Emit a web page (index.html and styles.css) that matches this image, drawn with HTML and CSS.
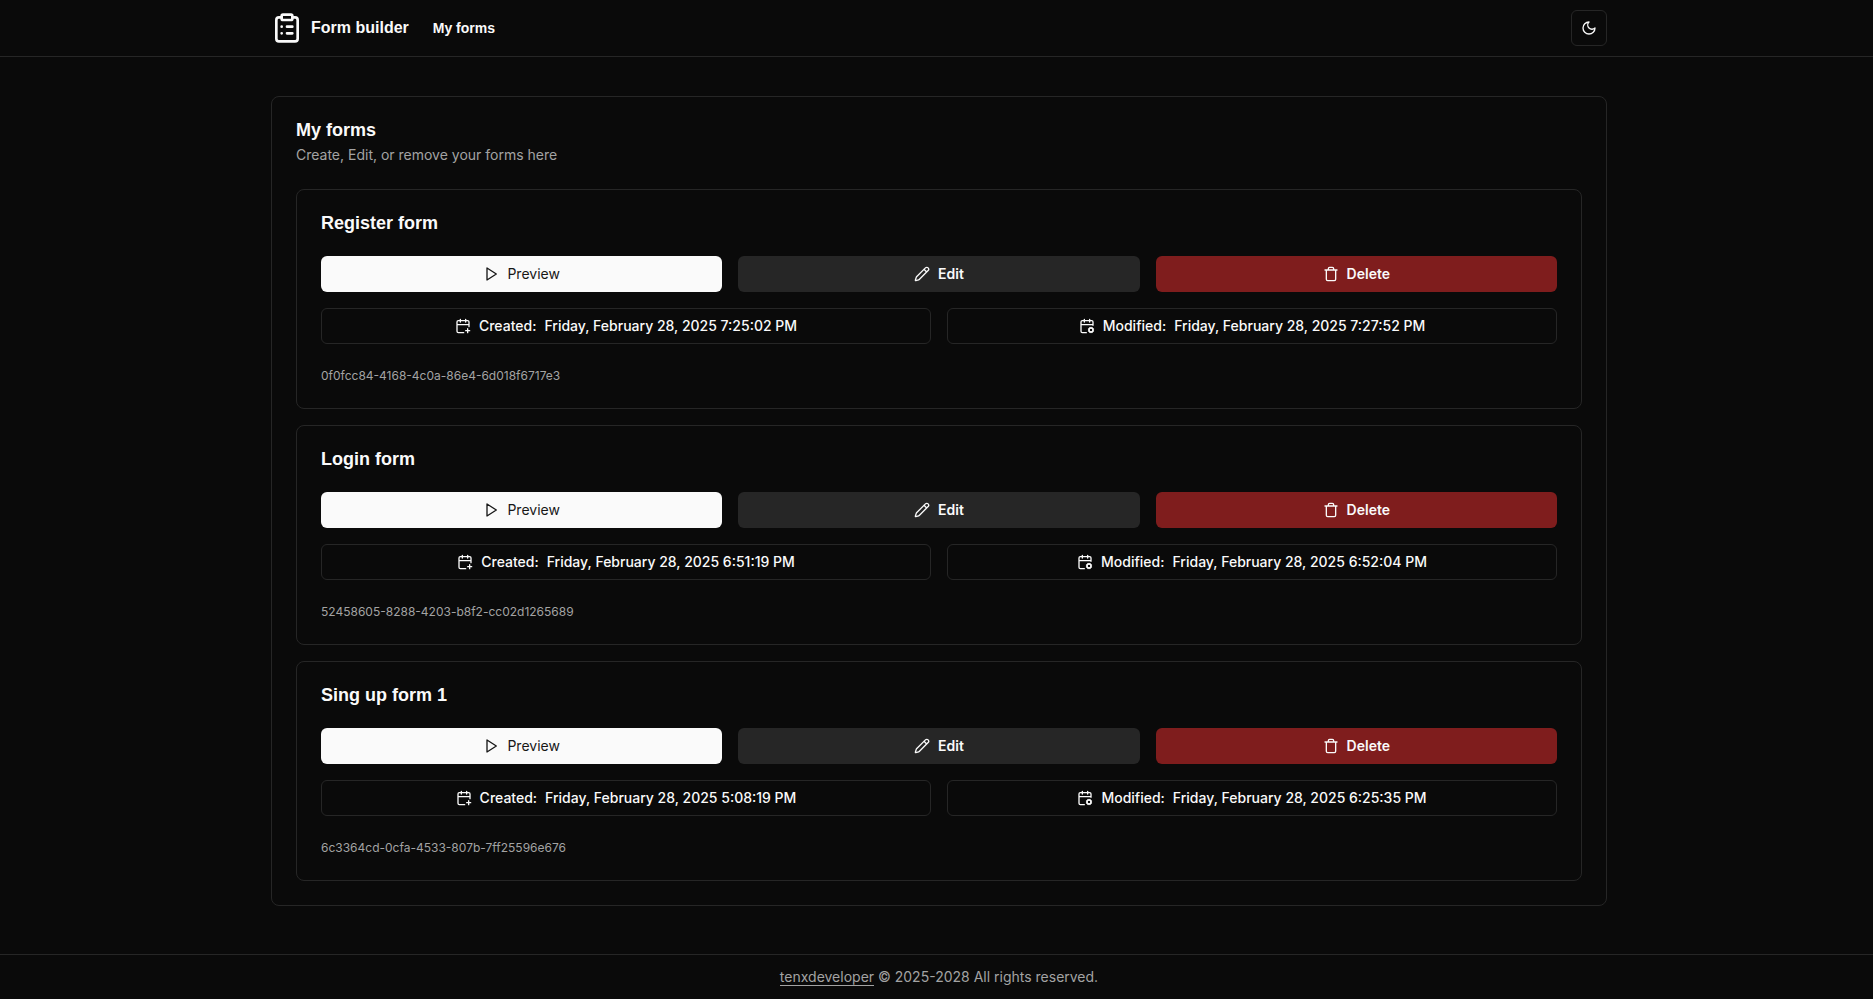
FILE: index.html
```html
<!DOCTYPE html>
<html lang="en">
<head>
<meta charset="utf-8">
<title>Form builder</title>
<meta name="viewport" content="width=device-width, initial-scale=1">
<link rel="stylesheet" href="styles.css">
</head>
<body>
<svg class="sprite" aria-hidden="true">
  <symbol id="clipboard" viewBox="0 0 24 24"><rect width="8" height="4" x="8" y="2" rx="1"/><path d="M16 4h2a2 2 0 0 1 2 2v14a2 2 0 0 1-2 2H6a2 2 0 0 1-2-2V6a2 2 0 0 1 2-2h2M12 11h4M12 16h4M8 11h.01M8 16h.01"/></symbol>
  <symbol id="moon" viewBox="0 0 24 24"><path d="M12 3a6 6 0 0 0 9 9 9 9 0 1 1-9-9Z"/></symbol>
  <symbol id="play" viewBox="0 0 24 24"><path d="M6 3 20 12 6 21Z"/></symbol>
  <symbol id="pencil" viewBox="0 0 24 24"><path d="M21.174 6.812a1 1 0 0 0-3.986-3.987L3.842 16.174a2 2 0 0 0-.5.83l-1.321 4.352a.5.5 0 0 0 .623.622l4.353-1.32a2 2 0 0 0 .83-.497zM15 5l4 4"/></symbol>
  <symbol id="trash" viewBox="0 0 24 24"><path d="M3 6h18M19 6v14c0 1-1 2-2 2H7c-1 0-2-1-2-2V6M8 6V4c0-1 1-2 2-2h4c1 0 2 1 2 2v2"/></symbol>
  <symbol id="calendar-plus" viewBox="0 0 24 24"><path d="M8 2v4M16 2v4M21 13V6a2 2 0 0 0-2-2H5a2 2 0 0 0-2 2v14a2 2 0 0 0 2 2h8M3 10h18M16 19h6M19 16v6"/></symbol>
  <symbol id="calendar-cog" viewBox="0 0 24 24"><path d="M8 2v4M16 2v4M21 11V6a2 2 0 0 0-2-2H5a2 2 0 0 0-2 2v14a2 2 0 0 0 2 2h6M3 10h18M15.2 16.9l-.9-.4M15.2 19.1l-.9.4M16.9 15.2l-.4-.9M16.9 20.8l-.4.9M19.5 14.3l-.4.9M19.5 21.7l-.4-.9M21.7 16.5l-.9.4M21.7 19.5l-.9-.4"/><circle cx="18" cy="18" r="3"/></symbol>
</svg>

<header class="site-header">
  <div class="container header-row">
    <nav class="nav">
      <a class="brand" href="#"><svg class="icon icon-logo"><use href="#clipboard"/></svg>Form builder</a>
      <a class="nav-link" href="#">My forms</a>
    </nav>
    <button class="theme-toggle" type="button" aria-label="Toggle theme"><svg class="icon"><use href="#moon"/></svg></button>
  </div>
</header>

<main class="container main">
  <section class="card">
    <div class="card-header">
      <h1 class="title">My forms</h1>
      <p class="description">Create, Edit, or remove your forms here</p>
    </div>
    <div class="form-list">
      <article class="card">
        <h2 class="title">Register form</h2>
        <div class="form-body">
          <div class="actions">
            <button class="button primary" type="button"><svg class="icon"><use href="#play"/></svg>Preview</button>
            <button class="button secondary" type="button"><svg class="icon"><use href="#pencil"/></svg>Edit</button>
            <button class="button destructive" type="button"><svg class="icon"><use href="#trash"/></svg>Delete</button>
          </div>
          <div class="dates">
            <div class="badge"><svg class="icon"><use href="#calendar-plus"/></svg><span>Created:</span><time>Friday, February 28, 2025 7:25:02 PM</time></div>
            <div class="badge"><svg class="icon"><use href="#calendar-cog"/></svg><span>Modified:</span><time>Friday, February 28, 2025 7:27:52 PM</time></div>
          </div>
        </div>
        <p class="form-id">0f0fcc84-4168-4c0a-86e4-6d018f6717e3</p>
      </article>
      <article class="card">
        <h2 class="title">Login form</h2>
        <div class="form-body">
          <div class="actions">
            <button class="button primary" type="button"><svg class="icon"><use href="#play"/></svg>Preview</button>
            <button class="button secondary" type="button"><svg class="icon"><use href="#pencil"/></svg>Edit</button>
            <button class="button destructive" type="button"><svg class="icon"><use href="#trash"/></svg>Delete</button>
          </div>
          <div class="dates">
            <div class="badge"><svg class="icon"><use href="#calendar-plus"/></svg><span>Created:</span><time>Friday, February 28, 2025 6:51:19 PM</time></div>
            <div class="badge"><svg class="icon"><use href="#calendar-cog"/></svg><span>Modified:</span><time>Friday, February 28, 2025 6:52:04 PM</time></div>
          </div>
        </div>
        <p class="form-id">52458605-8288-4203-b8f2-cc02d1265689</p>
      </article>
      <article class="card">
        <h2 class="title">Sing up form 1</h2>
        <div class="form-body">
          <div class="actions">
            <button class="button primary" type="button"><svg class="icon"><use href="#play"/></svg>Preview</button>
            <button class="button secondary" type="button"><svg class="icon"><use href="#pencil"/></svg>Edit</button>
            <button class="button destructive" type="button"><svg class="icon"><use href="#trash"/></svg>Delete</button>
          </div>
          <div class="dates">
            <div class="badge"><svg class="icon"><use href="#calendar-plus"/></svg><span>Created:</span><time>Friday, February 28, 2025 5:08:19 PM</time></div>
            <div class="badge"><svg class="icon"><use href="#calendar-cog"/></svg><span>Modified:</span><time>Friday, February 28, 2025 6:25:35 PM</time></div>
          </div>
        </div>
        <p class="form-id">6c3364cd-0cfa-4533-807b-7ff25596e676</p>
      </article>
    </div>
  </section>
</main>

<footer class="site-footer">
  <p class="container"><a class="footer-link" href="#">tenxdeveloper</a> © 2025-2028 All rights reserved.</p>
</footer>
</body>
</html>
```
FILE: styles.css
```css
:root {
  --background: #0a0a0a;
  --foreground: #fafafa;
  --muted: #a3a3a3;
  --border: #262626;
  --font-heading: "Liberation Sans", Arial, sans-serif;
}

* {
  box-sizing: border-box;
}

body {
  display: flex;
  flex-direction: column;
  min-height: 100vh;
  margin: 0;
  background: var(--background);
  color: var(--foreground);
  font-family: Inter, "Liberation Sans", sans-serif;
  font-size: 14px;
  line-height: 20px;
}

h1, h2, p {
  margin: 0;
}

a {
  color: inherit;
  text-decoration: none;
}

button {
  margin: 0;
  font: inherit;
  cursor: pointer;
}

.sprite {
  position: absolute;
  width: 0;
  height: 0;
}

.icon {
  flex: none;
  width: 16px;
  height: 16px;
  fill: none;
  stroke: currentColor;
  stroke-width: 2;
  stroke-linecap: round;
  stroke-linejoin: round;
}

.icon-logo {
  width: 32px;
  height: 32px;
}

.container {
  width: 100%;
  max-width: 1405px;
  margin: 0 auto;
  padding: 0 32px 0 37px;
}

.site-header {
  border-bottom: 1px solid var(--border);
}

.header-row {
  display: flex;
  align-items: center;
  justify-content: space-between;
  height: 56px;
}

.nav {
  display: flex;
  align-items: center;
  gap: 24px;
  font-family: var(--font-heading);
  font-weight: 700;
}

.brand {
  display: flex;
  align-items: center;
  gap: 8px;
  font-size: 16px;
}

.theme-toggle {
  display: flex;
  align-items: center;
  justify-content: center;
  width: 36px;
  height: 36px;
  padding: 0;
  border: 1px solid var(--border);
  border-radius: 6px;
  background: transparent;
  color: var(--foreground);
}

.main {
  flex: 1;
  padding-top: 39px;
  padding-bottom: 48px;
}

.card {
  padding: 24px;
  border: 1px solid var(--border);
  border-radius: 8px;
}

.card-header {
  display: flex;
  flex-direction: column;
  gap: 6px;
  margin-bottom: 24px;
}

.title {
  font-family: var(--font-heading);
  font-size: 18px;
  line-height: 18px;
  font-weight: 700;
}

.description {
  color: var(--muted);
}

.form-list,
.form-body {
  display: grid;
  gap: 16px;
}

.form-body {
  margin: 24px 0;
}

.actions,
.dates {
  display: grid;
  grid-template-columns: repeat(3, 1fr);
  gap: 16px;
}

.dates {
  grid-template-columns: repeat(2, 1fr);
}

.button,
.badge {
  display: flex;
  align-items: center;
  justify-content: center;
  gap: 8px;
  height: 36px;
  padding: 0 16px;
  border: 0;
  border-radius: 6px;
}

.badge {
  border: 1px solid var(--border);
  font-weight: 500;
}

.primary {
  background: #fafafa;
  color: #171717;
  font-weight: 400;
}

.secondary {
  background: #262626;
  color: var(--foreground);
  font-weight: 600;
}

.destructive {
  background: #7f1d1d;
  color: var(--foreground);
  font-weight: 600;
}

.form-id {
  color: var(--muted);
  font-size: 12px;
  line-height: 16px;
}

.site-footer {
  padding: 12px 0;
  border-top: 1px solid var(--border);
  color: var(--muted);
  text-align: center;
}

.footer-link {
  border-bottom: 1px solid currentColor;
}
```
